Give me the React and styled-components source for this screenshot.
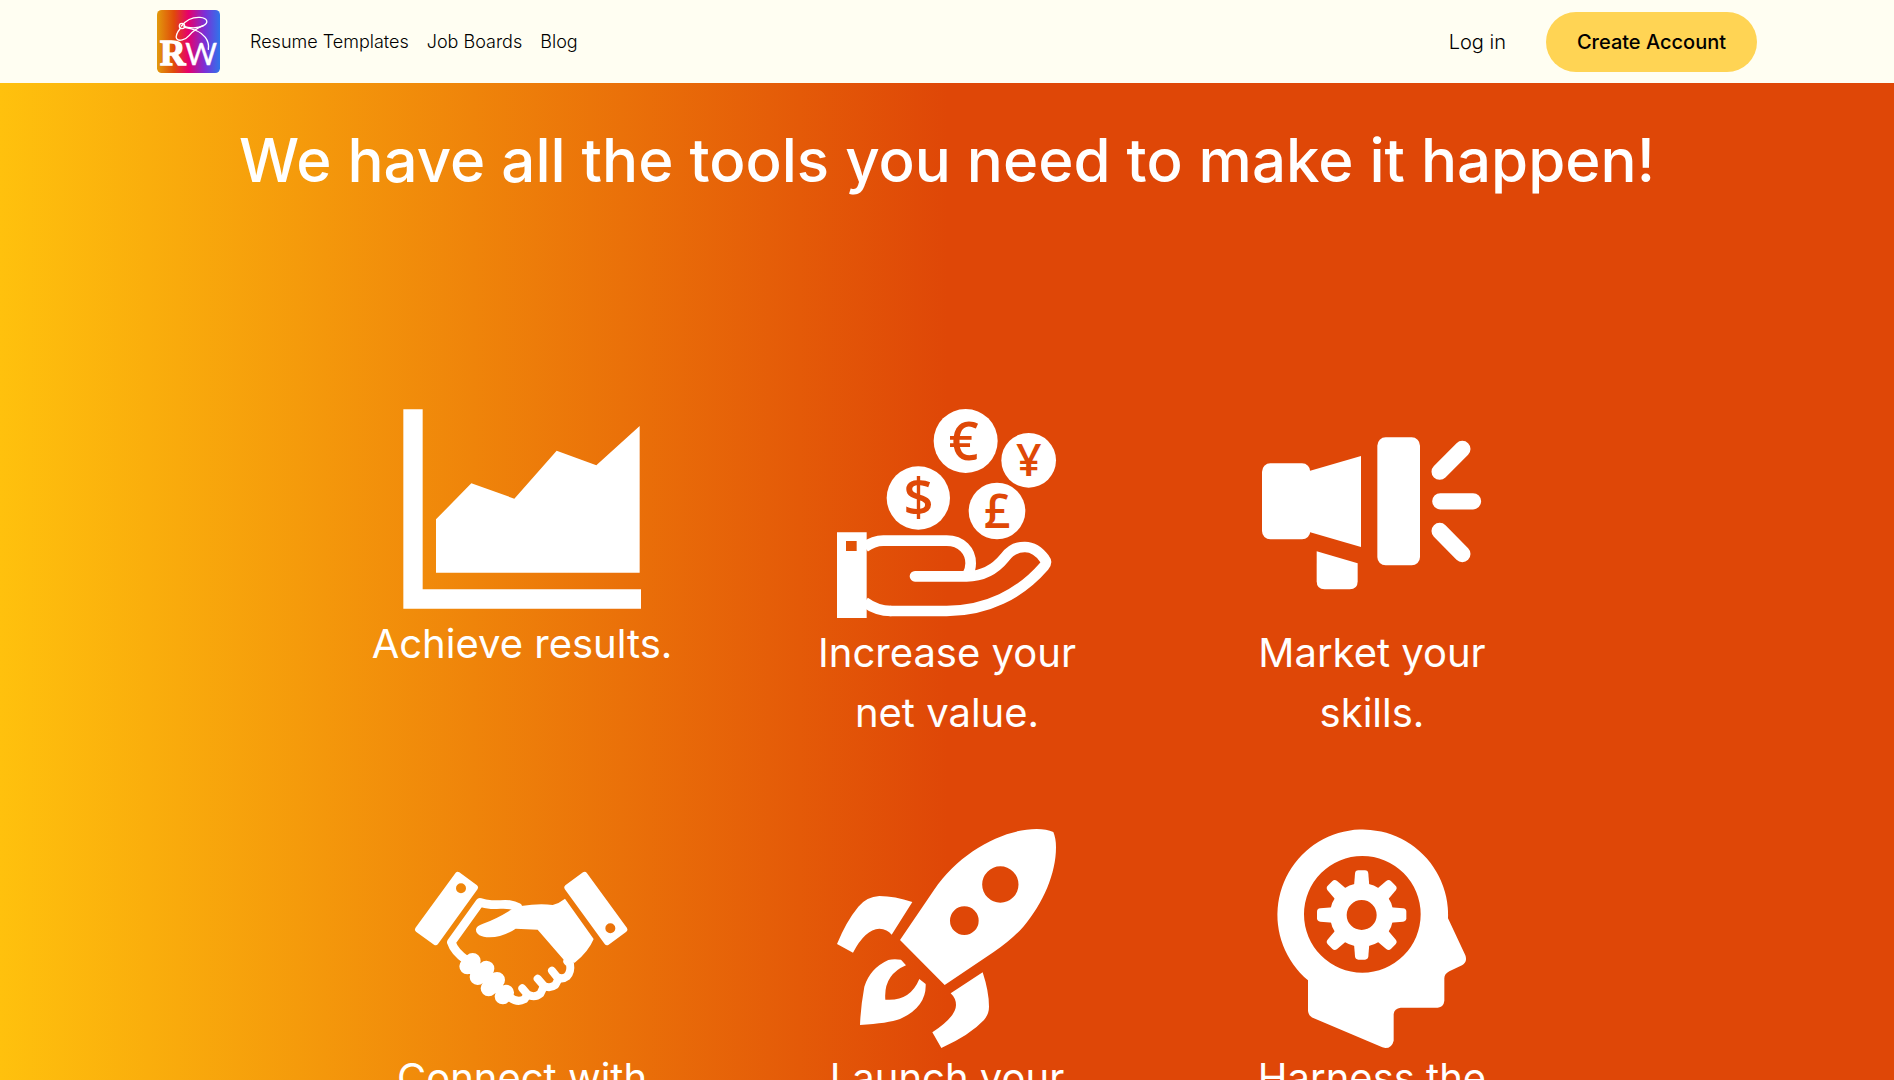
import React from "react";
import styled, { createGlobalStyle } from "styled-components";

const GlobalStyle = createGlobalStyle`
  * { box-sizing: border-box; }
  body {
    margin: 0;
    background: #df4707;
    font-family: Inter, "Liberation Sans", sans-serif;
    color: #000;
  }
`;

const Header = styled.header`
  display: flex;
  justify-content: center;
  background: #fffef2;
`;

const HeaderInner = styled.div`
  display: flex;
  align-items: center;
  justify-content: space-between;
  width: 100%;
  max-width: 1620px;
  padding: 10px 0 10px 20px;
`;

const HeaderGroup = styled.div`
  display: flex;
  align-items: center;
  gap: ${(p) => p.$gap}px;
`;

const Nav = styled.nav`
  display: flex;
  gap: 18px;
`;

const HomeLink = styled.a`
  display: block;
  height: 63px;
`;

const TextLink = styled.a`
  color: #000;
  font-size: ${(p) => (p.$large ? 20 : 18)}px;
  font-weight: 300;
  line-height: 24px;
  text-decoration: none;
`;

const CreateButton = styled.button`
  height: 60px;
  padding: 0 31px;
  border: 0;
  border-radius: 30px;
  background: #ffd454;
  color: #000;
  font-family: inherit;
  font-size: 20px;
  font-weight: 500;
  cursor: pointer;
`;

const Hero = styled.main`
  display: flex;
  flex-direction: column;
  align-items: center;
  gap: 204px;
  padding: 32px 20px 0;
  background: linear-gradient(90deg, #ffc10d 0%, #df4707 50%);
`;

const Title = styled.h1`
  margin: 0;
  color: #fff;
  font-size: 60px;
  font-weight: 500;
  line-height: 90px;
  text-align: center;
`;

const ToolGrid = styled.ul`
  display: grid;
  grid-template-columns: repeat(3, 1fr);
  row-gap: 86px;
  width: 100%;
  max-width: 1275px;
  margin: 0;
  padding: 0;
  list-style: none;
`;

const Tool = styled.li`
  display: flex;
  flex-direction: column;
  align-items: center;
`;

const Caption = styled.p`
  width: 320px;
  margin: 0;
  color: #fff;
  font-size: 40px;
  line-height: 60px;
  text-align: center;
`;

const Logo = () => (
  <svg width="63" height="63" viewBox="51 30 189 189" role="img" aria-label="RW">
    <defs>
      <linearGradient id="logo-bg">
        <stop offset="0" stopColor="#e29a0c" />
        <stop offset="0.27" stopColor="#e04a0a" />
        <stop offset="0.5" stopColor="#e6006c" />
        <stop offset="0.76" stopColor="#7a30d8" />
        <stop offset="1" stopColor="#2f74ea" />
      </linearGradient>
    </defs>
    <rect x="51" y="30" width="189" height="189" rx="14" fill="url(#logo-bg)" />
    <g fill="none" stroke="#fff" strokeWidth="4" strokeLinecap="round">
      <path d="M124 78C140 58 162 51 180 52C203 54 207 68 190 77C174 86 146 85 130 78" />
      <path d="M122 84C112 96 106 108 110 116C116 125 136 120 148 106C158 94 172 84 190 77" />
      <path d="M134 82C160 86 184 96 196 112C205 124 207 136 205 148" />
      <circle cx="126" cy="78" r="8" />
    </g>
    <text x="60" y="195" fill="#fff" stroke="#fff" strokeWidth="4" fontFamily="Liberation Serif, serif" fontWeight="700" fontSize="106">R</text>
    <text x="136" y="195" fill="#fff" stroke="#fff" strokeWidth="1" fontFamily="Lato, sans-serif" fontSize="92">W</text>
  </svg>
);

const ChartIcon = () => (
  <svg width="238" height="205" viewBox="129 57 714 615" fill="#fff" aria-hidden="true">
    <path d="M130 58H188V598H843V656H130Z" />
    <path d="M228 388L334 280L463 326L590 182L709 226L839 108V548H228Z" />
  </svg>
);

const MoneyIcon = () => (
  <svg width="220" height="214" viewBox="111 57 660 642" fill="#fff" aria-hidden="true">
    <circle cx="497" cy="153" r="96" />
    <circle cx="686" cy="211" r="82" />
    <circle cx="355" cy="324" r="95" />
    <circle cx="591" cy="363" r="85" />
    <g fill="#df4807" fontFamily="Open Sans, Noto Sans, sans-serif" fontWeight="600" textAnchor="middle">
      <text x="491" y="211" fontSize="158">€</text>
      <text x="686" y="258" fontSize="134">¥</text>
      <text x="356" y="378" fontSize="158">$</text>
      <text x="591" y="413" fontSize="140">£</text>
    </g>
    <path fillRule="evenodd" d="M111 427H200V684H111ZM138 453V483H170V453Z" />
    <g fill="none" stroke="#fff" strokeWidth="32" strokeLinecap="round" strokeLinejoin="round">
      <path strokeLinecap="butt" d="M194 472Q220 452 250 452H440C485 452 512 483 512 520Q512 540 502 556" />
      <path d="M345 559H500C548 559 584 540 614 503C638 470 664 471 675 471C700 471 718 485 734 507Q742 517 732 529C660 612 560 663 440 663H272" />
      <path strokeLinecap="butt" d="M274 663Q230 663 194 636" />
    </g>
  </svg>
);

const MegaphoneIcon = () => (
  <svg width="220" height="214" viewBox="96 27 660 642" fill="#fff" aria-hidden="true">
    <rect x="96" y="190" width="145" height="228" rx="25" />
    <path d="M238 213L393 168V441L238 396Z" />
    <rect x="442" y="112" width="128" height="384" rx="25" />
    <path d="M260 454L383 490V544Q383 568 359 568H284Q260 568 260 544Z" />
    <path d="M697 147L629 215M631 304H729M629 393L697 462" stroke="#fff" strokeWidth="49" strokeLinecap="round" />
  </svg>
);

const HandshakeIcon = () => (
  <svg width="220" height="219" viewBox="97 27 660 657" fill="#fff" aria-hidden="true">
    <path
      fillRule="evenodd"
      d="M228 158Q233 153 239 157L292 196Q298 201 294 207L175 372Q170 378 163 374L109 335Q103 330 107 324ZM244 190A15 15 0 1 0 244 220A15 15 0 1 0 244 190Z"
    />
    <path
      fillRule="evenodd"
      d="M621 158Q616 153 610 157L557 196Q551 201 555 207L675 372Q680 378 687 374L740 335Q746 330 742 324ZM692 310A15 15 0 1 0 692 340A15 15 0 1 0 692 310Z"
    />
    <path d="M396 268L424 258Q480 249 519 255Q540 249 556 236L642 357Q626 396 585 428L556 424L474 329L408 326Q370 352 330 352Q288 350 289 328Q290 318 310 311Q352 296 396 268Z" />
    <g fill="none" stroke="#fff" strokeLinecap="round" strokeLinejoin="round">
      <path strokeWidth="26" d="M415 262C390 248 370 255 335 254Q315 252 301 247L215 367Q224 396 262 422" />
      <path strokeWidth="24" d="M517 452L532 471Q548 480 562 469Q575 456 571 432L563 424" />
      <path strokeWidth="24" d="M474 476L492 497Q510 507 527 495L538 474" />
      <path strokeWidth="24" d="M428 505L444 524Q465 535 482 521L493 498" />
      <path strokeWidth="24" d="M388 530Q412 550 434 538L444 524" />
      <path strokeWidth="48" d="M279 423L263 439M320 446L294 471M352 480L327 505M379 518L369 529" />
    </g>
  </svg>
);

const RocketIcon = () => (
  <svg width="220" height="219" viewBox="81 57 660 657" fill="#fff" aria-hidden="true">
    <path
      fillRule="evenodd"
      d="M270 390L372 240C450 125 580 57 680 57Q710 57 730 66Q738 85 738 112C738 190 700 280 640 350Q605 390 550 427L404 525ZM571 169A54.500 54.500 0 1 0 571 278A54.500 54.500 0 1 0 571 169ZM463 289A43 43 0 1 0 463 375A43 43 0 1 0 463 289Z"
    />
    <path d="M307 276Q255 258 208 258Q170 260 145 290Q108 335 81 402L129 428Q165 358 208 356Q232 357 245 374Z" />
    <path d="M518 487Q537 545 537 590Q537 612 522 630Q480 675 394 714L367 667Q438 620 438 585Q438 565 422 550Z" />
    <path d="M273 449L288 466Q220 495 226 569Q300 575 328 507L347 522Q350 590 270 627Q235 640 150 645Q152 590 163 530Q180 475 235 450Q250 446 273 449Z" />
  </svg>
);

const HeadIcon = () => (
  <svg width="220" height="219" viewBox="66 57 660 657" fill="#fff" aria-hidden="true">
    <path
      fillRule="evenodd"
      d="M204 511A256 256 0 1 1 624 325L676 436Q683 456 666 466L628 484Q613 492 613 505V572Q611 591 593 593H482Q463 595 461 612V692Q456 714 436 714L427 712L218 623Q206 618 204 603ZM367 138A175 175 0 1 0 367 488A175 175 0 1 0 367 138Z"
    />
    <circle cx="365" cy="315" r="70" fill="none" stroke="#fff" strokeWidth="50" />
    {[0, 45, 90, 135, 180, 225, 270, 315].map((angle) => (
      <path
        key={angle}
        transform={`translate(365 315) rotate(${angle})`}
        d="M-23 -86L-20 -124Q-19 -134 -10 -134H10Q19 -134 20 -124L23 -86Z"
      />
    ))}
  </svg>
);

const tools = [
  { Icon: ChartIcon, text: "Achieve results." },
  { Icon: MoneyIcon, text: "Increase your net value." },
  { Icon: MegaphoneIcon, text: "Market your skills." },
  { Icon: HandshakeIcon, text: "Connect with" },
  { Icon: RocketIcon, text: "Launch your" },
  { Icon: HeadIcon, text: "Harness the" },
];

export default function App() {
  return (
    <>
      <GlobalStyle />
      <Header>
        <HeaderInner>
          <HeaderGroup $gap={30}>
            <HomeLink href="#home">
              <Logo />
            </HomeLink>
            <Nav>
              <TextLink href="#templates">Resume Templates</TextLink>
              <TextLink href="#jobs">Job Boards</TextLink>
              <TextLink href="#blog">Blog</TextLink>
            </Nav>
          </HeaderGroup>
          <HeaderGroup $gap={40}>
            <TextLink href="#login" $large>Log in</TextLink>
            <CreateButton type="button">Create Account</CreateButton>
          </HeaderGroup>
        </HeaderInner>
      </Header>
      <Hero>
        <Title>We have all the tools you need to make it happen!</Title>
        <ToolGrid>
          {tools.map(({ Icon, text }) => (
            <Tool key={text}>
              <Icon />
              <Caption>{text}</Caption>
            </Tool>
          ))}
        </ToolGrid>
      </Hero>
    </>
  );
}
